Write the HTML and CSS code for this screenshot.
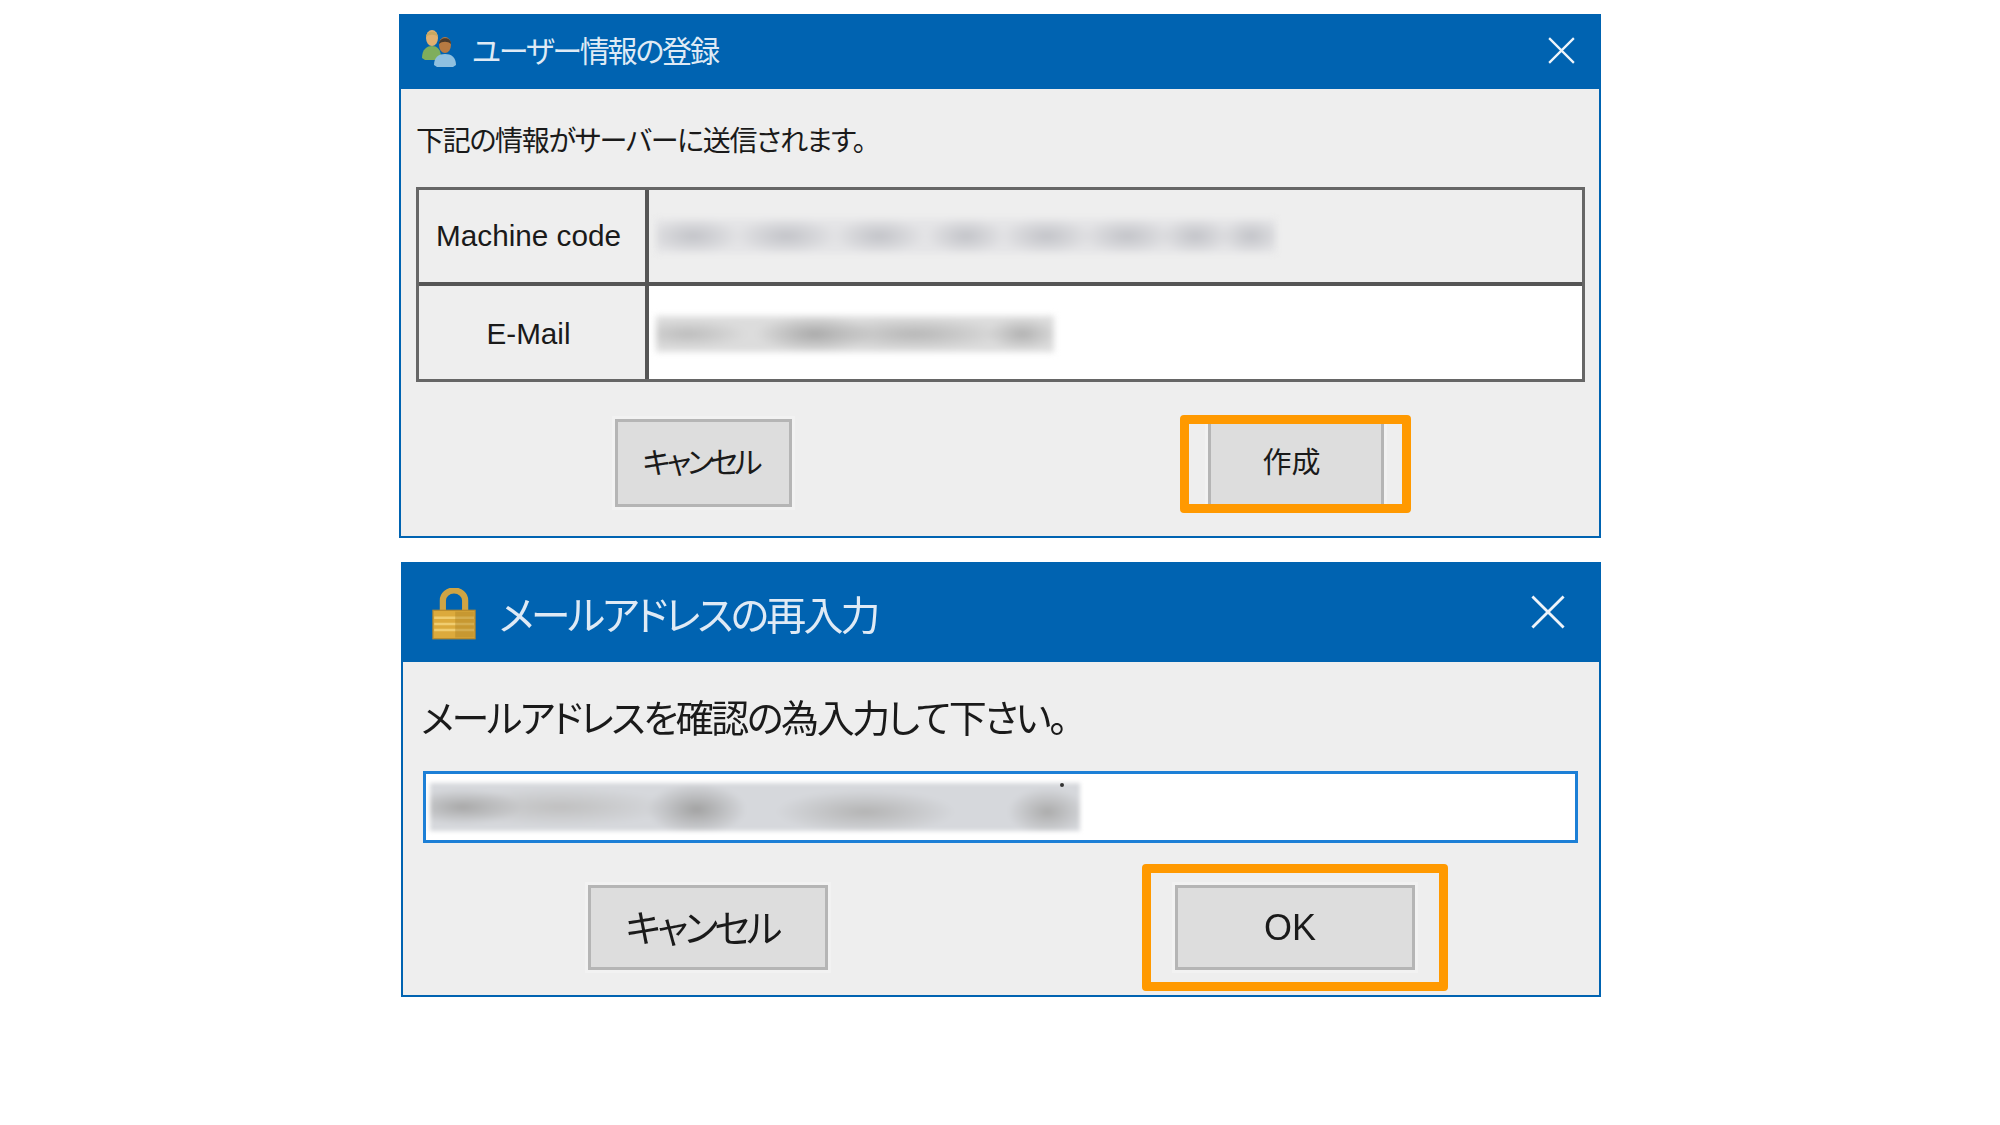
FILE: index.html
```html
<!DOCTYPE html>
<html lang="ja">
<head>
<meta charset="utf-8">
<title>ユーザー情報の登録</title>
<link rel="stylesheet" href="styles.css">
</head>
<body>
<main class="stack">
  <section class="dialog dialog-a">
    <header class="titlebar titlebar-a">
      <svg class="icon-users" viewBox="0 0 40 40" aria-hidden="true">
        <ellipse cx="13" cy="9" rx="6" ry="8" fill="#e0b070"/>
        <path d="M7 8c0-6 11-8 12 0-3-3-9-3-12 0z" fill="#c9a860"/>
        <path d="M3 29c0-9 5-12 10-12s9 3 9 12l-3 2H6z" fill="#7fae5c"/>
        <ellipse cx="26" cy="16" rx="6" ry="8" fill="#b77a42"/>
        <path d="M20 15c0-7 12-8 12 0-3-3-9-3-12 0z" fill="#4a3a2c"/>
        <path d="M15 36c0-8 5-11 11-11s11 3 11 11l-3 2H18z" fill="#8fc0e0"/>
      </svg>
      <h1 class="title title-a">ユーザー情報の登録</h1>
      <svg class="close close-a" viewBox="0 0 24 24" aria-hidden="true"><path d="M1 1l22 22M23 1L1 23"/></svg>
    </header>
    <div class="body body-a">
      <p class="msg msg-a">下記の情報がサーバーに送信されます。</p>
      <div class="grid">
        <div class="cell label">Machine code</div>
        <div class="cell value"><span class="blur blur-code"></span></div>
        <div class="cell label">E-Mail</div>
        <div class="cell value white"><span class="blur blur-mail"></span></div>
      </div>
      <div class="actions actions-a">
        <button class="btn btn-a">キャンセル</button>
        <div class="hl hl-a"><button class="btn btn-create">作成</button></div>
      </div>
    </div>
  </section>

  <section class="dialog dialog-b">
    <header class="titlebar titlebar-b">
      <svg class="icon-lock" viewBox="0 0 36 42" aria-hidden="true">
        <path d="M9 20V10a9 8 0 0 1 18 0v10" fill="none" stroke="#cfa444" stroke-width="5"/>
        <rect x="1" y="18" width="34" height="23" fill="#dcaa3c" stroke="#b8892a"/>
        <path d="M2 24h32M2 29h32M2 34h32" stroke="#f0cd70" stroke-width="2"/>
        <rect x="19" y="19" width="15" height="21" fill="#a87c20" opacity=".4"/>
      </svg>
      <h1 class="title title-b">メールアドレスの再入力</h1>
      <svg class="close close-b" viewBox="0 0 24 24" aria-hidden="true"><path d="M1 1l22 22M23 1L1 23"/></svg>
    </header>
    <div class="body body-b">
      <p class="msg msg-b">メールアドレスを確認の為入力して下さい。</p>
      <div class="input"><span class="blur blur-input"></span><span class="speck"></span></div>
      <div class="actions actions-b">
        <button class="btn btn-b">キャンセル</button>
        <div class="hl hl-b"><button class="btn btn-ok">OK</button></div>
      </div>
    </div>
  </section>
</main>
</body>
</html>
```

FILE: styles.css
```css
html, body { margin: 0; padding: 0; background: #fff; }
body { width: 2000px; height: 1125px; overflow: hidden; font-family: "Noto Sans CJK JP", "Liberation Sans", sans-serif; color: #1a1a1a; font-feature-settings: "palt"; }
.stack { display: flex; flex-direction: column; align-items: flex-start; padding: 14px 0 0 399px; gap: 24px; filter: blur(0.5px); }
.dialog { box-sizing: border-box; background: #eee; border: 2px solid #0063b1; border-top: 0; }
.dialog-a { width: 1202px; height: 524px; }
.dialog-b { width: 1200px; height: 435px; margin-left: 2px; }
.titlebar { display: flex; align-items: center; background: #0063b1; color: #dfeaf5; margin: 0 -2px; }
.titlebar-a { height: 75px; padding: 0 26px 0 20px; }
.titlebar-b { height: 100px; padding: 0 36px 0 30px; }
.title { margin: 0; font-weight: 400; flex: 1; white-space: nowrap; }
.title-a { font-size: 30px; margin-left: 13px; margin-top: -6px; letter-spacing: -2.2px; }
.title-b { font-size: 40px; margin-left: 22px; margin-top: 1px; letter-spacing: -2.9px; }
.icon-users { width: 40px; height: 40px; flex: none; margin-top: -5px; }
.icon-lock { width: 46px; height: 52px; flex: none; margin-top: 3px; }
.close { flex: none; fill: none; stroke: #eef4fa; stroke-width: 2; }
.close-a { width: 27px; height: 27px; margin-top: -3px; }
.close-b { width: 34px; height: 34px; }
.body { display: flex; flex-direction: column; }
.body-a { padding: 0 14px 0 15px; }
.body-b { padding: 0 21px 0 20px; }
.msg { margin: 0; white-space: nowrap; }
.msg-a { font-size: 28px; letter-spacing: -1.3px; line-height: 40px; margin-top: 30px; }
.msg-b { font-size: 38px; letter-spacing: -2.45px; line-height: 50px; margin-top: 29px; margin-left: -2px; }
.grid { display: grid; grid-template-columns: 230px 1fr; grid-template-rows: 92px 97px; margin-top: 28px; border: 3px solid #666; }
.cell { display: flex; align-items: center; box-sizing: border-box; }
.cell:nth-child(n+3) { border-top: 4px solid #555; }
.label { justify-content: center; border-right: 4px solid #555; font-family: "Liberation Sans", sans-serif; font-size: 29.7px; padding-right: 7px; }
.cell:nth-child(n+3).label { padding-top: 2px; }
.value { padding-left: 7px; }
.white { background: #fff; padding-top: 2px; }
.blur { display: block; }
.blur-code { width: 620px; height: 34px; filter: blur(3px);
  background:
    radial-gradient(ellipse 48px 18px at 6% 50%, #c2c3c8, transparent),
    radial-gradient(ellipse 52px 18px at 21% 50%, #c2c3c8, transparent),
    radial-gradient(ellipse 46px 18px at 36% 50%, #c2c3c8, transparent),
    radial-gradient(ellipse 40px 18px at 50% 50%, #c2c3c8, transparent),
    radial-gradient(ellipse 46px 18px at 63% 50%, #c2c3c8, transparent),
    radial-gradient(ellipse 46px 18px at 76% 50%, #c2c3c8, transparent),
    radial-gradient(ellipse 36px 18px at 87% 50%, #c2c3c8, transparent),
    radial-gradient(ellipse 32px 18px at 96% 50%, #c2c3c8, transparent),
    #e4e4e6; }
.blur-mail { width: 398px; height: 36px; filter: blur(3px);
  background:
    radial-gradient(ellipse 60px 14px at 8% 50%, #bcbcbc, transparent),
    radial-gradient(ellipse 60px 18px at 40% 50%, #a8a8a8, transparent),
    radial-gradient(ellipse 90px 16px at 65% 50%, #b6b6b6, transparent),
    radial-gradient(ellipse 36px 16px at 92% 50%, #b0b0b0, transparent),
    #dcdcdc; }
.input { position: relative; margin-top: 30px; height: 72px; box-sizing: border-box; background: #fff; border: 3px solid #1c7fd6; padding: 9px 4px; }
.blur-input { width: 650px; height: 48px; filter: blur(2px);
  background:
    radial-gradient(ellipse 60px 18px at 5% 50%, #a8a8a8, transparent),
    radial-gradient(ellipse 50px 26px at 41% 55%, #a2a2a2, transparent),
    radial-gradient(ellipse 110px 20px at 20% 50%, #c0c0c0, transparent),
    radial-gradient(ellipse 90px 22px at 67% 60%, #b4b4b4, transparent),
    radial-gradient(ellipse 40px 24px at 95% 60%, #acacac, transparent),
    #d6d8dc; }
.speck { position: absolute; left: 634px; top: 9px; width: 4px; height: 4px; border-radius: 50%; background: #333; }
.actions { display: flex; align-items: center; }
.actions-a { margin-top: 31px; padding-left: 199px; gap: 388px; }
.actions-b { margin-top: 21px; padding-left: 165px; gap: 314px; }
.btn { font-family: "Noto Sans CJK JP", sans-serif; font-feature-settings: "palt"; background: #ddd; color: #1a1a1a; border: 3px solid #b5b5b5; padding: 0; box-shadow: 0 0 0 3px #f2f2f2; }
.btn-a { width: 177px; height: 88px; font-size: 30px; letter-spacing: -4px; padding: 0 6px 7px 0; }
.btn-b { width: 240px; height: 85px; font-size: 38px; letter-spacing: -3.8px; padding: 0 12px 5px 0; }
.btn-create { flex: none; width: 176px; height: 88px; font-size: 29px; padding: 0 8px 8px 0; }
.btn-ok { width: 240px; height: 85px; font-size: 36px; font-family: "Liberation Sans", sans-serif; padding-right: 10px; }
.hl { box-sizing: border-box; border: 9px solid #f90; border-radius: 4px; display: flex; align-items: center; justify-content: center; overflow: hidden; }
.hl-a { width: 231px; height: 98px; margin-top: 2px; }
.hl-b { width: 306px; height: 127px; }
```
